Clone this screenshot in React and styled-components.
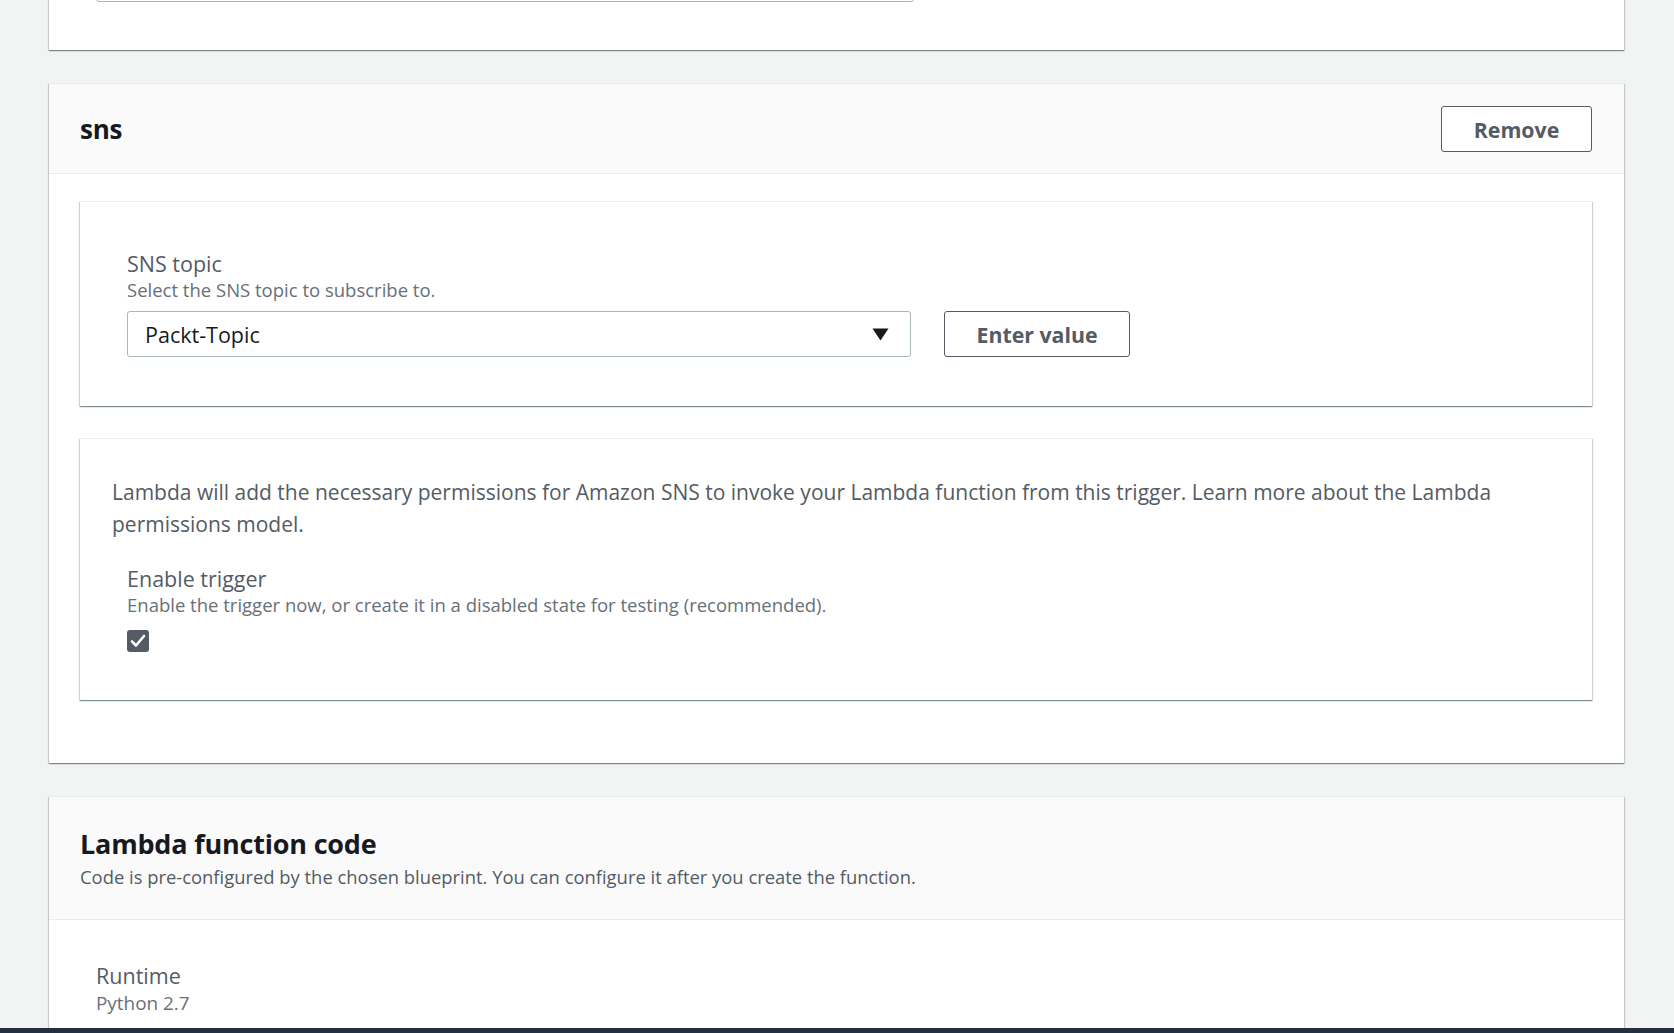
import styled, { createGlobalStyle } from "styled-components";

const GlobalStyle = createGlobalStyle`
  html, body {
    margin: 0;
    padding: 0;
    background: #f2f3f3;
    font-family: "Open Sans", "Noto Sans", sans-serif;
    color: #16191f;
    overflow: hidden;
  }
  * { box-sizing: border-box; }
`;

const Page = styled.main`
  display: flex;
  flex-direction: column;
  gap: 33px;
  width: 1575px;
  margin: -100px 0 0 49px;
`;

const Card = styled.section`
  background: #ffffff;
  box-shadow: 0 1px 1px 0 rgba(0, 28, 36, 0.3),
    1px 1px 1px 0 rgba(0, 28, 36, 0.15), -1px 1px 1px 0 rgba(0, 28, 36, 0.15);
  border-top: 1px solid #eaeded;
`;

const CardHeader = styled.header`
  display: flex;
  align-items: ${(p) => (p.$stack ? "flex-start" : "center")};
  flex-direction: ${(p) => (p.$stack ? "column" : "row")};
  justify-content: space-between;
  background: #fafafa;
  border-bottom: 1px solid #eaeded;
  padding: ${(p) => p.$pad};
`;

const Title = styled.h2`
  margin: 0;
  font-weight: 700;
  font-size: ${(p) => p.$size || "26px"};
  line-height: 36px;
  color: #16191f;
  letter-spacing: -0.2px;
`;

const HeaderDesc = styled.p`
  margin: 3px 0 0;
  font-size: 18.4px;
  line-height: 24px;
  color: #545b64;
`;

const CardBody = styled.div`
  display: flex;
  flex-direction: column;
  gap: 32px;
  padding: ${(p) => p.$pad};
`;

const Panel = styled.div`
  background: #ffffff;
  box-shadow: 0 1px 1px 0 rgba(0, 28, 36, 0.3),
    1px 1px 1px 0 rgba(0, 28, 36, 0.15), -1px 1px 1px 0 rgba(0, 28, 36, 0.15);
  border-top: 1px solid #eaeded;
  padding: ${(p) => p.$pad};
`;

const Field = styled.div`
  display: flex;
  flex-direction: column;
`;

const Label = styled.div`
  font-size: 21.5px;
  line-height: 28px;
  color: #545b64;
`;

const Hint = styled.div`
  font-size: 18.5px;
  line-height: 24px;
  color: #687078;
`;

const Row = styled.div`
  display: flex;
  gap: 33px;
  margin-top: 9px;
`;

const Select = styled.div`
  display: flex;
  align-items: center;
  justify-content: space-between;
  width: ${(p) => p.$width};
  height: 46px;
  padding: 0 21px 0 17px;
  border: 1px solid #aab7b8;
  border-radius: 3px;
  font-size: 21.5px;
  color: #16191f;
  background: #fff;
`;

const Button = styled.button`
  height: 46px;
  width: ${(p) => p.$width};
  background: #ffffff;
  border: 1px solid #545b64;
  border-radius: 3px;
  font-family: inherit;
  font-size: 21.3px;
  font-weight: 700;
  color: #545b64;
  padding: 0;
  cursor: pointer;
`;

const Paragraph = styled.p`
  margin: 0;
  font-size: 21px;
  line-height: 32px;
  color: #545b64;
`;

const Indented = styled.div`
  display: flex;
  flex-direction: column;
  padding-left: 15px;
  margin-top: 25px;
`;

const Check = styled.span`
  display: flex;
  align-items: center;
  justify-content: center;
  width: 22px;
  height: 22px;
  margin-top: 13px;
  border-radius: 3px;
  background: #545b64;
`;

const Footer = styled.div`
  position: fixed;
  left: 0;
  right: 0;
  bottom: 0;
  height: 5px;
  background: #232f3e;
`;

const Value = styled.div`
  font-size: 18.9px;
  line-height: 26px;
  color: #687078;
`;

const Arrow = () => (
  <svg width="17" height="13" viewBox="0 0 17 13">
    <path d="M0.5 0.5 H16.5 L8.5 12.5 Z" fill="#16191f" />
  </svg>
);

const Tick = () => (
  <svg width="16" height="14" viewBox="0 0 16 14">
    <path
      d="M2 7.5 L6 11.5 L14 2"
      fill="none"
      stroke="#fff"
      strokeWidth="2.6"
      strokeLinecap="round"
      strokeLinejoin="round"
    />
  </svg>
);

export default function App() {
  return (
    <>
      <GlobalStyle />
      <Page>
        <Card>
          <CardBody $pad="55px 47px 48px">
            <Select $width="818px" />
          </CardBody>
        </Card>

        <Card>
          <CardHeader $pad="22px 32px 21px 31px">
            <Title $size="26px">sns</Title>
            <Button $width="151px">Remove</Button>
          </CardHeader>
          <CardBody $pad="27px 32px 63px 31px">
            <Panel $pad="48px 47px 49px">
              <Field>
                <Label>SNS topic</Label>
                <Hint>Select the SNS topic to subscribe to.</Hint>
                <Row>
                  <Select $width="784px">
                    Packt-Topic
                    <Arrow />
                  </Select>
                  <Button $width="186px">Enter value</Button>
                </Row>
              </Field>
            </Panel>
            <Panel $pad="37px 32px 48px">
              <Paragraph>
                Lambda will add the necessary permissions for Amazon SNS to
                invoke your Lambda function from this trigger. Learn more about
                the Lambda permissions model.
              </Paragraph>
              <Indented>
                <Label>Enable trigger</Label>
                <Hint>
                  Enable the trigger now, or create it in a disabled state for
                  testing (recommended).
                </Hint>
                <Check>
                  <Tick />
                </Check>
              </Indented>
            </Panel>
          </CardBody>
        </Card>

        <Card>
          <CardHeader $stack $pad="29px 31px 30px">
            <Title $size="27px">Lambda function code</Title>
            <HeaderDesc>
              Code is pre-configured by the chosen blueprint. You can configure
              it after you create the function.
            </HeaderDesc>
          </CardHeader>
          <CardBody $pad="42px 47px 120px">
            <Field>
              <Label>Runtime</Label>
              <Value>Python 2.7</Value>
            </Field>
          </CardBody>
        </Card>
      </Page>
      <Footer />
    </>
  );
}
